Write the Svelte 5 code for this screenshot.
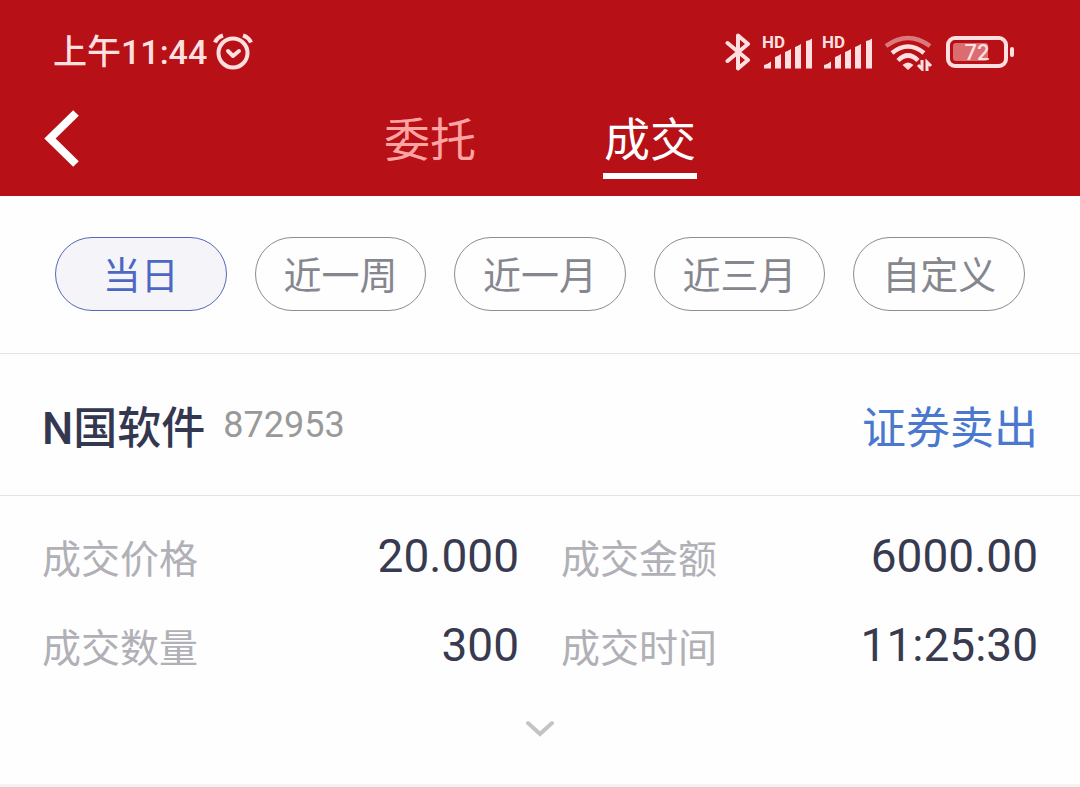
<script>
  let tabs = ['委托', '成交']
  let activeTab = '成交'

  let periods = ['当日', '近一周', '近一月', '近三月', '自定义']
  let activePeriod = '当日'

  let trade = {
    name: 'N国软件',
    code: '872953',
    side: '证券卖出',
    details: [
      { label: '成交价格', value: '20.000' },
      { label: '成交金额', value: '6000.00' },
      { label: '成交数量', value: '300' },
      { label: '成交时间', value: '11:25:30' },
    ],
  }
</script>

<div class="page">
  <header>
    <div class="status">
      <div class="time">
        <span>上午11:44</span>
        <svg width="40" height="38" viewBox="0 0 40 38" fill="none" stroke="#ffdfdf" stroke-width="4">
          <circle cx="20" cy="20" r="14.5" />
          <path d="M15 18l5 5l6-5" stroke-linecap="round" stroke-linejoin="round" />
          <path d="M2 9.5Q4 4.500 10 2.5M30 2.5Q36 4.5 38 9.5" />
        </svg>
      </div>
      <div class="signals">
        <svg width="26" height="40" viewBox="0 0 26 40" fill="none" stroke="#ffdfdf" stroke-width="4" stroke-linejoin="round" stroke-linecap="round">
          <path d="M2.500 11L23 28L13 36.5V3.5L23 12L2.500 29" />
        </svg>
        <div class="sims">
          {#each [1, 2] as sim}
            <svg width="52" height="44" viewBox="0 0 52 44" fill="#ffdfdf">
              <text x="1" y="18" font-size="17">HD</text>
              <path d="M3 38.500V35Q7 34 10 31.500V38.500Z" />
              <path d="M14 38.500V27Q17 26 20 24V38.500Z" />
              <path d="M24 38.500V22Q27 21 30 19V38.500Z" />
              <path d="M34 38.500V17Q37 16 40 14V38.500Z" />
              <path d="M45 38.500V11Q48 10.500 51 8.500V38.500Z" />
            </svg>
          {/each}
        </div>
        <svg class="wifi" width="48" height="38" viewBox="0 0 48 38" fill="none" stroke="#ffdfdf" stroke-width="4.5">
          <path d="M1 13Q23-3 45 13" opacity="0.5" />
          <path d="M7 20Q23 7 39 20" />
          <path d="M13 27.5Q23 17.500 33 27.5" />
          <path d="M23 37L17.500 32Q23 27 28.500 32Z" fill="#ffdfdf" stroke="none" />
          <path d="M37 27v9l-4-4M42 38V29l4 4" stroke-width="3" />
        </svg>
        <svg class="battery" width="68" height="32" viewBox="0 0 68 32" fill="none">
          <rect x="2" y="2" width="58" height="28" rx="7" stroke="#ffdfdf" stroke-width="4" />
          <rect x="7" y="7" width="35" height="18" rx="3" fill="#db6c70" />
          <rect x="64" y="11" width="4" height="10" rx="2" fill="#ffdfdf" />
          <text x="31" y="24" font-size="22" text-anchor="middle" fill="#ffdfdf">72</text>
        </svg>
      </div>
    </div>

    <nav>
      <button class="back" aria-label="返回">
        <svg width="36" height="58" viewBox="0 0 36 58" fill="none" stroke="#fff" stroke-width="8">
          <path d="M32 3L6 28.500L32 54" />
        </svg>
      </button>
      <div class="tabs">
        {#each tabs as tab}
          <button class:active={tab === activeTab} on:click={() => (activeTab = tab)}>{tab}</button>
        {/each}
      </div>
    </nav>
  </header>

  <main>
    <div class="periods">
      {#each periods as period}
        <button class:active={period === activePeriod} on:click={() => (activePeriod = period)}>
          {period}
        </button>
      {/each}
    </div>

    <div class="stock">
      <h2>{trade.name}</h2>
      <span class="code">{trade.code}</span>
      <span class="side">{trade.side}</span>
    </div>

    <dl>
      {#each trade.details as item}
        <div class="item">
          <dt>{item.label}</dt>
          <dd>{item.value}</dd>
        </div>
      {/each}
    </dl>

    <button class="more" aria-label="展开">
      <svg width="30" height="18" viewBox="0 0 30 18" fill="none" stroke="#c4c4c4" stroke-width="4" stroke-linecap="round">
        <path d="M3 3L15 14L27 3" />
      </svg>
    </button>
  </main>
</div>

<style>
  :global(body) {
    margin: 0;
    background: #f2f2f2;
  }

  .page {
    font-family: Roboto, "Noto Sans CJK SC", sans-serif;
  }

  button {
    border: none;
    background: none;
    padding: 0;
    font-family: inherit;
    cursor: pointer;
  }

  svg {
    display: block;
    flex: none;
  }

  header {
    background: #b71016;
    height: 196px;
    box-sizing: border-box;
    padding-top: 28px;
  }

  .status {
    display: flex;
    justify-content: space-between;
    align-items: center;
    height: 48px;
    padding: 0 66px 0 53px;
    color: #ffdfdf;
  }

  .time {
    display: flex;
    align-items: center;
    gap: 6px;
    font-size: 34px;
    font-weight: 500;
    line-height: 48px;
  }

  .signals {
    display: flex;
    align-items: center;
    gap: 10px;
    font-weight: 500;
  }

  .sims {
    display: flex;
    gap: 8px;
    font-weight: 700;
  }

  .wifi {
    margin-left: 2px;
  }

  .battery {
    margin-left: 3px;
  }

  nav {
    display: grid;
    grid-template-columns: 1fr auto 1fr;
    align-items: center;
    padding: 22px 44px 0;
  }

  .back {
    justify-self: start;
  }

  .tabs {
    display: flex;
    gap: 126px;
  }

  .tabs button {
    width: 94px;
    height: 81px;
    padding-top: 8px;
    border-bottom: 6px solid transparent;
    color: #ffa3a3;
    font-size: 46px;
    line-height: 64px;
    white-space: nowrap;
  }

  .tabs button.active {
    color: #fff;
    border-color: #fff;
  }

  main {
    background: #fefefe;
  }

  .periods {
    display: flex;
    gap: 28px;
    padding: 41px 55px 42px;
    border-bottom: 1px solid #e3e3e3;
  }

  .periods button {
    flex: 1;
    height: 74px;
    padding-bottom: 4px;
    border: 1px solid #8b8b90;
    border-radius: 37px;
    color: #86868e;
    font-size: 38px;
  }

  .periods button.active {
    background: #f5f5f9;
    border-color: #5468b8;
    color: #4c68c4;
  }

  .stock {
    display: flex;
    align-items: center;
    gap: 18px;
    height: 141px;
    padding: 0 42px;
    border-bottom: 1px solid #e3e3e3;
  }

  h2 {
    margin: 0;
    color: #343750;
    font-size: 44px;
    font-weight: 500;
  }

  .code {
    color: #999;
    font-size: 36px;
  }

  .side {
    margin-left: auto;
    color: #4a78cf;
    font-size: 44px;
  }

  dl {
    display: grid;
    grid-template-columns: 1fr 1fr;
    column-gap: 42px;
    margin: 0;
    padding: 15px 42px 0;
  }

  .item {
    display: flex;
    justify-content: space-between;
    align-items: center;
    height: 89px;
  }

  dt {
    color: #b0b0b6;
    font-size: 39px;
  }

  dd {
    margin: 0;
    color: #383a50;
    font-size: 46px;
  }

  .more {
    display: flex;
    justify-content: center;
    width: 100%;
    padding: 31px 0 46px;
  }
</style>
